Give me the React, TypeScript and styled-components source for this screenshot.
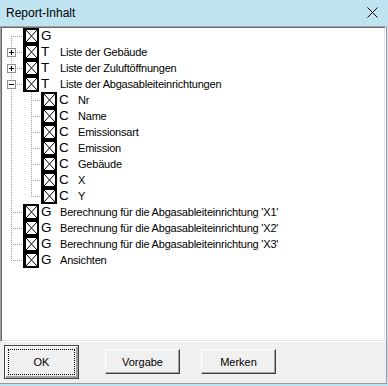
import React from 'react'
import styled, { createGlobalStyle } from 'styled-components'

const GlobalStyle = createGlobalStyle`
  html, body {
    margin: 0;
    padding: 0;
    background: #bfe3f0;
  }
  * {
    box-sizing: border-box;
  }
`

type Connector = 'first' | 'tee' | 'elbow' | 'pass' | 'none'
type Expander = 'plus' | 'minus' | undefined

interface NodeItem {
  kind: string
  label: string
  level: 0 | 1
  line: Connector
  expander?: Expander
}

const nodes: NodeItem[] = [
  { kind: 'G', label: '', level: 0, line: 'first' },
  { kind: 'T', label: 'Liste der Gebäude', level: 0, line: 'tee', expander: 'plus' },
  { kind: 'T', label: 'Liste der Zuluftöffnungen', level: 0, line: 'tee', expander: 'plus' },
  { kind: 'T', label: 'Liste der Abgasableiteinrichtungen', level: 0, line: 'tee', expander: 'minus' },
  { kind: 'C', label: 'Nr', level: 1, line: 'tee' },
  { kind: 'C', label: 'Name', level: 1, line: 'tee' },
  { kind: 'C', label: 'Emissionsart', level: 1, line: 'tee' },
  { kind: 'C', label: 'Emission', level: 1, line: 'tee' },
  { kind: 'C', label: 'Gebäude', level: 1, line: 'tee' },
  { kind: 'C', label: 'X', level: 1, line: 'tee' },
  { kind: 'C', label: 'Y', level: 1, line: 'elbow' },
  { kind: 'G', label: "Berechnung für die Abgasableiteinrichtung 'X1'", level: 0, line: 'tee' },
  { kind: 'G', label: "Berechnung für die Abgasableiteinrichtung 'X2'", level: 0, line: 'tee' },
  { kind: 'G', label: "Berechnung für die Abgasableiteinrichtung 'X3'", level: 0, line: 'tee' },
  { kind: 'G', label: 'Ansichten', level: 0, line: 'elbow' },
]

const Window = styled.div`
  width: 388px;
  height: 386px;
  display: flex;
  flex-direction: column;
  background: #bfe3f0;
`

const TitleBar = styled.div`
  height: 26px;
  flex: none;
  display: flex;
  align-items: center;
  justify-content: space-between;
  padding: 0 10px 1px 6px;
  font-family: 'Liberation Sans', Arial, sans-serif;
  font-size: 12px;
  color: #000;
`

const Frame = styled.div`
  width: 387px;
  height: 358px;
  display: flex;
  flex-direction: column;
  background: #f0f0f0;
  border-right: 1px solid #9a9a9a;
  border-bottom: 1px solid #9a9a9a;
`

const TreePanel = styled.div`
  height: 316px;
  flex: none;
  background: #fff;
  border-top: 1px solid #a0a0a0;
  border-left: 1px solid #a0a0a0;
  border-right: 1px solid #fff;
  border-bottom: 1px solid #fff;
  box-shadow: inset 1px 1px #696969, inset -1px -1px #e3e3e3;
  padding: 1px 0 0 1px;
  font-family: 'Liberation Sans', Arial, sans-serif;
`

const Row = styled.div`
  height: 16px;
  display: flex;
  align-items: center;
  white-space: nowrap;
`

const Cell = styled.svg<{ $w: number }>`
  width: ${({ $w }) => $w}px;
  height: 16px;
  flex: none;
  display: block;
`

const Kind = styled.span`
  width: 18px;
  margin-left: 2px;
  flex: none;
  font-size: 13.5px;
  line-height: 16px;
  color: #000;
`

const Label = styled.span`
  margin-left: 1px;
  font-size: 11px;
  letter-spacing: -0.2px;
  line-height: 16px;
  color: #000;
`

const ButtonBar = styled.div`
  flex: 1;
  display: flex;
  align-items: center;
  padding: 0 0 2px 4px;
  gap: 21px;
`

const Button = styled.button<{ $default?: boolean }>`
  width: 75px;
  height: ${({ $default }) => ($default ? '34px' : '25px')};
  margin-right: ${({ $default }) => ($default ? '5px' : '0')};
  padding: 0;
  background: #f0f0f0;
  font-family: 'Liberation Sans', Arial, sans-serif;
  font-size: 11px;
  color: #000;
  border: 1px solid ${({ $default }) => ($default ? '#404040' : '#fff')};
  border-right-color: #404040;
  border-bottom-color: #404040;
  box-shadow: ${({ $default }) =>
    $default
      ? 'inset 1px 1px #fff, inset -1px -1px #a0a0a0, inset -2px -2px #a0a0a0'
      : 'inset -1px -1px #a0a0a0, inset 1px 1px #f0f0f0'};
  display: flex;
  align-items: center;
  justify-content: center;
`

const FocusRing = styled.span`
  width: 67px;
  height: 26px;
  border: 1px dotted #000;
  display: flex;
  align-items: center;
  justify-content: center;
`

function Lines({ line, w, x, expander }: { line: Connector; w: number; x: number; expander?: Expander }) {
  const cx = x + 0.5
  return (
    <Cell $w={w} viewBox={`0 0 ${w} 16`} shapeRendering="crispEdges">
      <g stroke="#a0a0a0" strokeDasharray="1 1" fill="none">
        {line === 'first' && <line x1={cx} y1={8} x2={cx} y2={16} />}
        {(line === 'tee' || line === 'pass') && <line x1={cx} y1={0} x2={cx} y2={16} />}
        {line === 'elbow' && <line x1={cx} y1={0} x2={cx} y2={9} />}
        {line !== 'pass' && line !== 'none' && <line x1={x} y1={8.5} x2={w} y2={8.5} />}
      </g>
      {expander && (
        <g>
          <rect x={x - 3.5} y={4.5} width={8} height={8} fill="#fff" stroke="#919191" />
          <line x1={x - 2} y1={8.5} x2={x + 3} y2={8.5} stroke="#000" />
          {expander === 'plus' && <line x1={cx} y1={6} x2={cx} y2={11} stroke="#000" />}
        </g>
      )}
    </Cell>
  )
}

function CheckBox() {
  return (
    <Cell $w={16} viewBox="0 0 16 16" shapeRendering="crispEdges">
      <rect x={0} y={0} width={16} height={16} fill="#000" />
      <rect x={3} y={2} width={11} height={12} fill="#fff" />
      <g shapeRendering="auto" stroke="#000" strokeWidth={1}>
        <line x1={3} y1={2} x2={14} y2={14} />
        <line x1={14} y1={2} x2={3} y2={14} />
      </g>
    </Cell>
  )
}

function TreeRow({ node }: { node: NodeItem }) {
  return (
    <Row>
      {node.level === 0 ? (
        <Lines line={node.line} w={21} x={9} expander={node.expander} />
      ) : (
        <>
          <Lines line="pass" w={21} x={9} />
          <Lines line={node.line} w={18} x={8} />
        </>
      )}
      <CheckBox />
      <Kind>{node.kind}</Kind>
      {node.label && <Label>{node.label}</Label>}
    </Row>
  )
}

export default function App() {
  return (
    <>
      <GlobalStyle />
      <Window>
        <TitleBar>
          <span>Report-Inhalt</span>
          <svg width="11" height="11" viewBox="0 0 11 11">
            <path d="M0.5 0.5 L10.5 10.5 M10.5 0.5 L0.5 10.5" stroke="#000" strokeWidth="1" />
          </svg>
        </TitleBar>
        <Frame>
          <TreePanel>
            {nodes.map((n, i) => (
              <TreeRow key={i} node={n} />
            ))}
          </TreePanel>
          <ButtonBar>
            <Button $default>
              <FocusRing>OK</FocusRing>
            </Button>
            <Button>Vorgabe</Button>
            <Button>Merken</Button>
          </ButtonBar>
        </Frame>
      </Window>
    </>
  )
}
